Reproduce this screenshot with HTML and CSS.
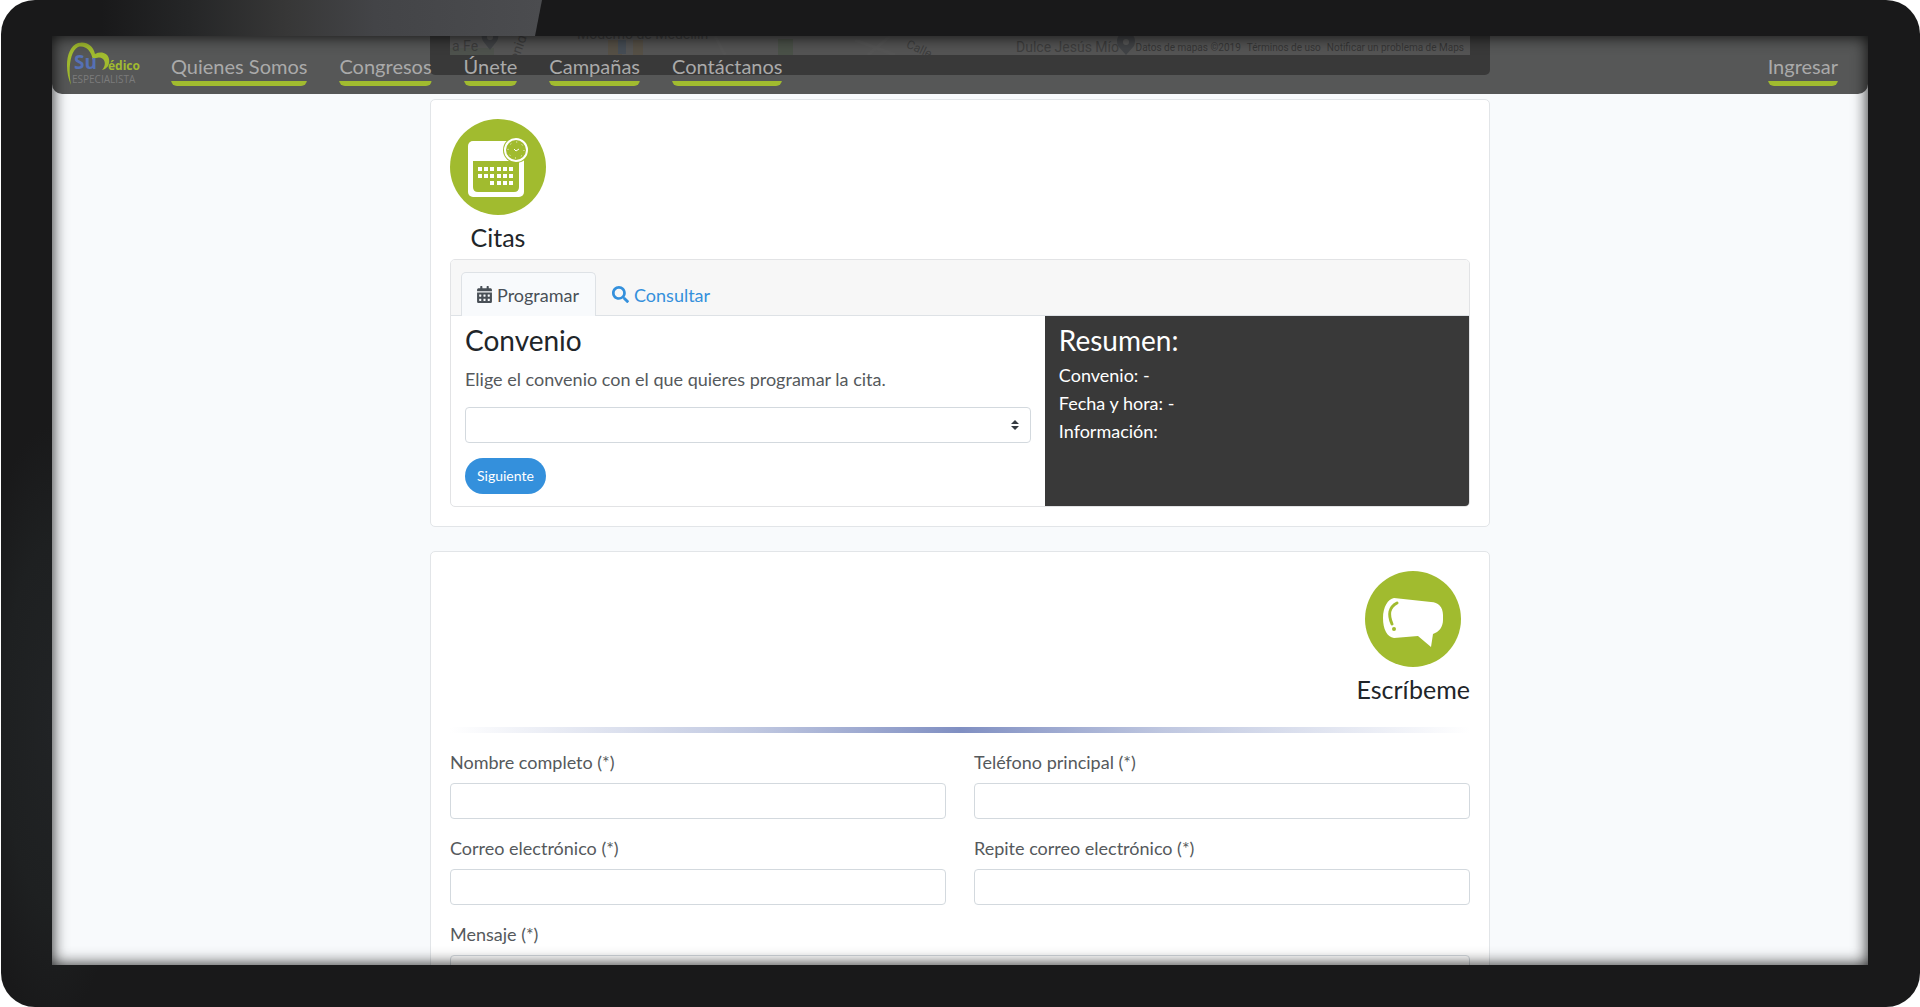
FILE: index.html
```html
<!DOCTYPE html>
<html lang="es">
<head>
<meta charset="utf-8">
<title>Su Médico Especialista</title>
<link rel="stylesheet" href="styles.css">
</head>
<body>
<div class="device">
  <div class="screen">
    <nav class="navbar">
      <a class="brand" href="#" aria-label="Su Médico Especialista">
        <svg width="76" height="46" viewBox="0 0 76 46">
          <path d="M5 45C-2 29 0 7 12 3c8-2 15 2 17 11 6-3 13-1 14 5 1 6-2 10-7 11 3-3 4-8 1-11-3-2-6-2-10 1C25 10 19 5 12 7 4 11 2 30 5 45z" fill="#a1bb2f"/>
          <text x="8" y="29" class="logo-su">Su</text>
          <text x="42" y="30" class="logo-medico">édico</text>
          <text x="6" y="43" class="logo-esp">ESPECIALISTA</text>
        </svg>
      </a>
      <a class="nav-link" href="#">Quienes Somos</a>
      <a class="nav-link" href="#">Congresos</a>
      <a class="nav-link" href="#">Únete</a>
      <a class="nav-link" href="#">Campañas</a>
      <a class="nav-link" href="#">Contáctanos</a>
      <a class="nav-link nav-end" href="#">Ingresar</a>
    </nav>

    <main class="content">
      <section class="map-card">
        <div class="map">
          <svg class="map-art" width="1019" height="19" viewBox="0 0 1019 19">
            <path d="M0 12h44v7H0z" fill="#c3dfbd"/>
            <path d="M158 4h14v15h-14zM183 4h10v15h-10z" fill="#f7cf90"/>
            <path d="M168 4h8v14h-8z" fill="#8ab9f0"/>
            <path d="M328 3h15v16h-15z" fill="#a9d69b"/>
            <path d="M265 0l10 19M405 4l40 15M440 0l-22 19" stroke="#f4f4f4" stroke-width="3" fill="none"/>
            <path d="M40 14l-7-9c-3-5-1-10 7-10s10 5 7 10zM676 19l-8-9c-3-8 1-13 8-13s11 5 8 13z" fill="#6b7b8c"/>
            <circle cx="40" cy="1" r="3" fill="#fff"/>
            <circle cx="676" cy="6" r="3" fill="#fff"/>
          </svg>
          <span class="place place-fe">a Fe</span>
          <span class="place place-avenida">enida</span>
          <span class="place place-moderno">Moderno de Medellín</span>
          <span class="place place-calle">Calle</span>
          <span class="place place-dulce">Dulce Jesús Mío</span>
          <div class="map-legal"><span>Datos de mapas ©2019</span><span>Términos de uso</span><span>Notificar un problema de Maps</span></div>
        </div>
      </section>

      <section class="card">
        <header class="card-title">
          <svg width="96" height="96" viewBox="0 0 96 96">
            <circle cx="48" cy="48" r="48" fill="#a1bb2f"/>
            <rect x="18" y="22" width="56" height="56" rx="5" fill="#fff"/>
            <path d="M23 42h46v26q0 5-5 5H28q-5 0-5-5z" fill="#a1bb2f"/>
            <path d="M28 48h4v4h-4zm6 0h4v4h-4zm6 0h4v4h-4zm7 0h4v4h-4zm6 0h4v4h-4zm6 0h4v4h-4zM28 55h4v4h-4zm6 0h4v4h-4zm6 0h4v4h-4zm7 0h4v4h-4zm6 0h4v4h-4zm6 0h4v4h-4zM40 62h4v4h-4zm7 0h4v4h-4zm6 0h4v4h-4zm6 0h4v4h-4z" fill="#fff"/>
            <circle cx="66" cy="31" r="13" fill="#a1bb2f"/>
            <circle cx="66" cy="31" r="11" fill="#a1bb2f" stroke="#fff" stroke-width="2"/>
            <circle cx="66" cy="31" r="8" fill="none" stroke="#fff" stroke-width="1" stroke-dasharray="1 5.28"/>
            <path d="M64 30l2 2 3-2" fill="none" stroke="#fff"/>
          </svg>
          <h2>Citas</h2>
        </header>
        <div class="panel">
          <div class="tabs" role="tablist">
            <button class="tab active" type="button" role="tab" aria-selected="true">
              <svg width="15" height="17" viewBox="0 0 448 512"><path fill="currentColor" d="M0 464c0 27 21 48 48 48h352c27 0 48-21 48-48V192H0zm320-196c0-7 5-12 12-12h40c7 0 12 5 12 12v40c0 7-5 12-12 12h-40c-7 0-12-5-12-12zm0 128c0-7 5-12 12-12h40c7 0 12 5 12 12v40c0 7-5 12-12 12h-40c-7 0-12-5-12-12zM192 268c0-7 5-12 12-12h40c7 0 12 5 12 12v40c0 7-5 12-12 12h-40c-7 0-12-5-12-12zm0 128c0-7 5-12 12-12h40c7 0 12 5 12 12v40c0 7-5 12-12 12h-40c-7 0-12-5-12-12zM64 268c0-7 5-12 12-12h40c7 0 12 5 12 12v40c0 7-5 12-12 12H76c-7 0-12-5-12-12zm0 128c0-7 5-12 12-12h40c7 0 12 5 12 12v40c0 7-5 12-12 12H76c-7 0-12-5-12-12zM400 64h-48V16c0-9-7-16-16-16h-32c-9 0-16 7-16 16v48H160V16c0-9-7-16-16-16h-32c-9 0-16 7-16 16v48H48C21 64 0 85 0 112v48h448v-48c0-27-21-48-48-48z"/></svg>
              Programar
            </button>
            <button class="tab" type="button" role="tab" aria-selected="false">
              <svg width="17" height="17" viewBox="0 0 512 512"><path fill="currentColor" d="M505 443L405 343c-4-5-11-7-17-7h-16c28-36 44-80 44-128C416 93 323 0 208 0S0 93 0 208s93 208 208 208c48 0 92-16 128-44v16c0 6 3 13 7 17l100 100c9 9 24 9 34 0l28-28c9-10 9-25 0-34zM208 336c-71 0-128-57-128-128S137 80 208 80s128 57 128 128-57 128-128 128z"/></svg>
              Consultar
            </button>
          </div>
          <div class="panel-body">
            <form class="booking">
              <h3>Convenio</h3>
              <label for="convenio">Elige el convenio con el que quieres programar la cita.</label>
              <div class="select">
                <select id="convenio"><option></option></select>
                <svg width="8" height="10" viewBox="0 0 8 10"><path d="M0 4l4-4 4 4zM0 6h8l-4 4z" fill="#343a40"/></svg>
              </div>
              <button class="btn" type="button">Siguiente</button>
            </form>
            <aside class="summary">
              <h3>Resumen:</h3>
              <p>Convenio: -</p>
              <p>Fecha y hora: -</p>
              <p>Información:</p>
            </aside>
          </div>
        </div>
      </section>

      <section class="card">
        <header class="card-title title-end">
          <svg width="96" height="96" viewBox="0 0 96 96">
            <circle cx="48" cy="48" r="48" fill="#a1bb2f"/>
            <path d="M29 27l37 4c7 0 12 5 12 13v5c0 7-4 12-10 14l-2 13-13-11-24 2c-7-1-11-9-11-20s5-19 11-20z" fill="#fff"/>
            <path d="M32 32c-8 4-9 12-5 21" fill="none" stroke="#a1bb2f" stroke-width="3" stroke-linecap="round"/>
            <circle cx="29" cy="58" r="2" fill="#a1bb2f"/>
          </svg>
          <h2>Escríbeme</h2>
        </header>
        <div class="divider"></div>
        <form class="contact">
          <div class="field"><label for="nombre">Nombre completo (*)</label><input id="nombre" type="text"></div>
          <div class="field"><label for="telefono">Teléfono principal (*)</label><input id="telefono" type="tel"></div>
          <div class="field"><label for="correo">Correo electrónico (*)</label><input id="correo" type="email"></div>
          <div class="field"><label for="correo2">Repite correo electrónico (*)</label><input id="correo2" type="email"></div>
          <div class="field wide"><label for="mensaje">Mensaje (*)</label><textarea id="mensaje" rows="4"></textarea></div>
        </form>
      </section>
    </main>
  </div>
</div>
</body>
</html>
```
FILE: styles.css
```css
* { box-sizing: border-box; }

body {
  margin: 0;
  background: #fff;
  color: #55595c;
  font: 18px/26px Lato, "Open Sans", sans-serif;
}

h2, h3, p { margin: 0; font-weight: 400; }
h2 { font-size: 25px; line-height: 30px; color: #212529; }
h3 { font-size: 28px; line-height: 34px; color: #212529; }
button, input, select, textarea { font: inherit; }

/* Device frame */
.device {
  position: relative;
  display: flex;
  height: 100vh;
  margin-left: 1px;
  padding: 36px 52px 42px 51px;
  border-radius: 34px;
  background:
    radial-gradient(ellipse 80px 300px at 51px 72%, #212325, #1e2021 60%, transparent),
    #19191a;
}
.device::before {
  content: "";
  position: absolute;
  top: 0;
  left: 100px;
  width: 441px;
  height: 36px;
  background: linear-gradient(90deg, #19191a, #252627 20%, #373737 42%, #434447 62%, #4b4c4f);
  clip-path: polygon(0 0, 100% 0, 434px 100%, 0 100%);
}
.screen {
  position: relative;
  flex: 1;
  overflow: hidden;
  background: #f8fafc;
}
.screen::after {
  content: "";
  position: absolute;
  z-index: 2;
  inset: 0;
  box-shadow: inset 0 0 16px rgba(0, 0, 0, .9);
  pointer-events: none;
}

/* Navigation */
.navbar {
  position: absolute;
  z-index: 1;
  inset: 0 0 auto;
  display: flex;
  align-items: flex-end;
  gap: 32px;
  height: 58px;
  padding: 0 30px 8px 14px;
  border-radius: 0 0 10px 10px;
  background: rgba(57, 57, 57, .85);
}
.brand { height: 46px; margin-right: -3px; }
.brand svg { display: block; }
.logo-su { font: 700 19px "Open Sans", sans-serif; fill: #5570b5; }
.logo-medico { font: 700 12px "Open Sans", sans-serif; fill: #a1bb2f; }
.logo-esp { font: 10px "Open Sans", sans-serif; fill: #7b7b7b; }
.nav-link {
  padding-bottom: 8px;
  border-radius: 0 0 6px 6px;
  background: linear-gradient(#a1bb2f, #a1bb2f) no-repeat bottom / 100% 5px;
  color: #aaa;
  font-size: 20px;
  line-height: 24px;
  text-decoration: none;
}
.nav-end { margin-left: auto; }

.content {
  display: flex;
  flex-direction: column;
  gap: 24px;
  width: min(1060px, 100%);
  margin: 0 auto;
}

/* Map */
.map-card {
  padding: 0 20px 20px;
  border-radius: 0 0 5px 5px;
  background: #393939;
}
.map {
  position: relative;
  height: 19px;
  overflow: hidden;
  background: #e8e8e8;
  font: 14px/16px Roboto, sans-serif;
  color: #555;
}
.map-art { display: block; }
.place { position: absolute; white-space: nowrap; }
.place-fe { left: 2px; top: 2px; }
.place-avenida { left: 52px; top: 0; transform: rotate(-70deg); }
.place-moderno { left: 127px; top: -10px; }
.place-calle { left: 456px; top: 5px; font-size: 12px; transform: rotate(25deg); }
.place-dulce { left: 566px; top: 3px; }
.map-legal {
  position: absolute;
  right: 0;
  bottom: 0;
  display: flex;
  gap: 6px;
  padding: 0 6px;
  font-size: 10px;
  line-height: 14px;
  color: #222;
}

/* Cards */
.card {
  padding: 19px;
  border: 1px solid #e2e5e8;
  border-radius: 5px;
  background: #fff;
}
.card-title {
  display: flex;
  flex-direction: column;
  align-items: center;
  gap: 7px;
  width: max-content;
}
.title-end { margin-left: auto; }

.panel {
  margin-top: 7px;
  border: 1px solid #e2e3e5;
  border-radius: 5px;
  overflow: hidden;
}
.tabs {
  display: flex;
  height: 56px;
  padding: 12px 10px 0;
  border-bottom: 1px solid #dee2e6;
  background: #f7f7f7;
}
.tab {
  display: flex;
  align-items: center;
  gap: 5px;
  height: 44px;
  padding: 0 16px 0 15px;
  border: 1px solid transparent;
  border-bottom: 0;
  border-radius: 5px 5px 0 0;
  background: none;
  color: #3490dc;
}
.tab.active {
  border-color: #dee2e6;
  background: #f8fafc;
  color: #495057;
}
.panel-body { display: grid; grid-template-columns: 7fr 5fr; }
.booking { padding: 7px 14px 12px; }
.booking label { display: block; margin: 9px 0 15px; }
.select { position: relative; }
.select svg { position: absolute; right: 12px; top: 13px; }
select, input, textarea {
  display: block;
  width: 100%;
  height: 36px;
  padding: 4px 12px;
  border: 1px solid #d3d9de;
  border-radius: 4px;
  background: #fff;
}
select { appearance: none; }
textarea { height: 110px; }
.btn {
  display: block;
  height: 36px;
  margin-top: 15px;
  padding: 0 12px;
  border: 0;
  border-radius: 18px;
  background: #3490dc;
  color: #fff;
  font-size: 14px;
}
.summary {
  padding: 7px 14px;
  background: #393939;
  color: #fff;
  line-height: 28px;
}
.summary h3 { margin-bottom: 4px; color: #fff; }

/* Contact form */
.divider {
  height: 6px;
  margin: 23px 0 16px;
  background: linear-gradient(90deg, #fff, #bfc7e0 30%, #808fc2 50%, #bfc7e0 70%, #fff);
}
.contact {
  display: grid;
  grid-template-columns: 1fr 1fr;
  gap: 16px 28px;
}
.field label { display: block; margin-bottom: 8px; }
.wide { grid-column: 1 / -1; }
```
